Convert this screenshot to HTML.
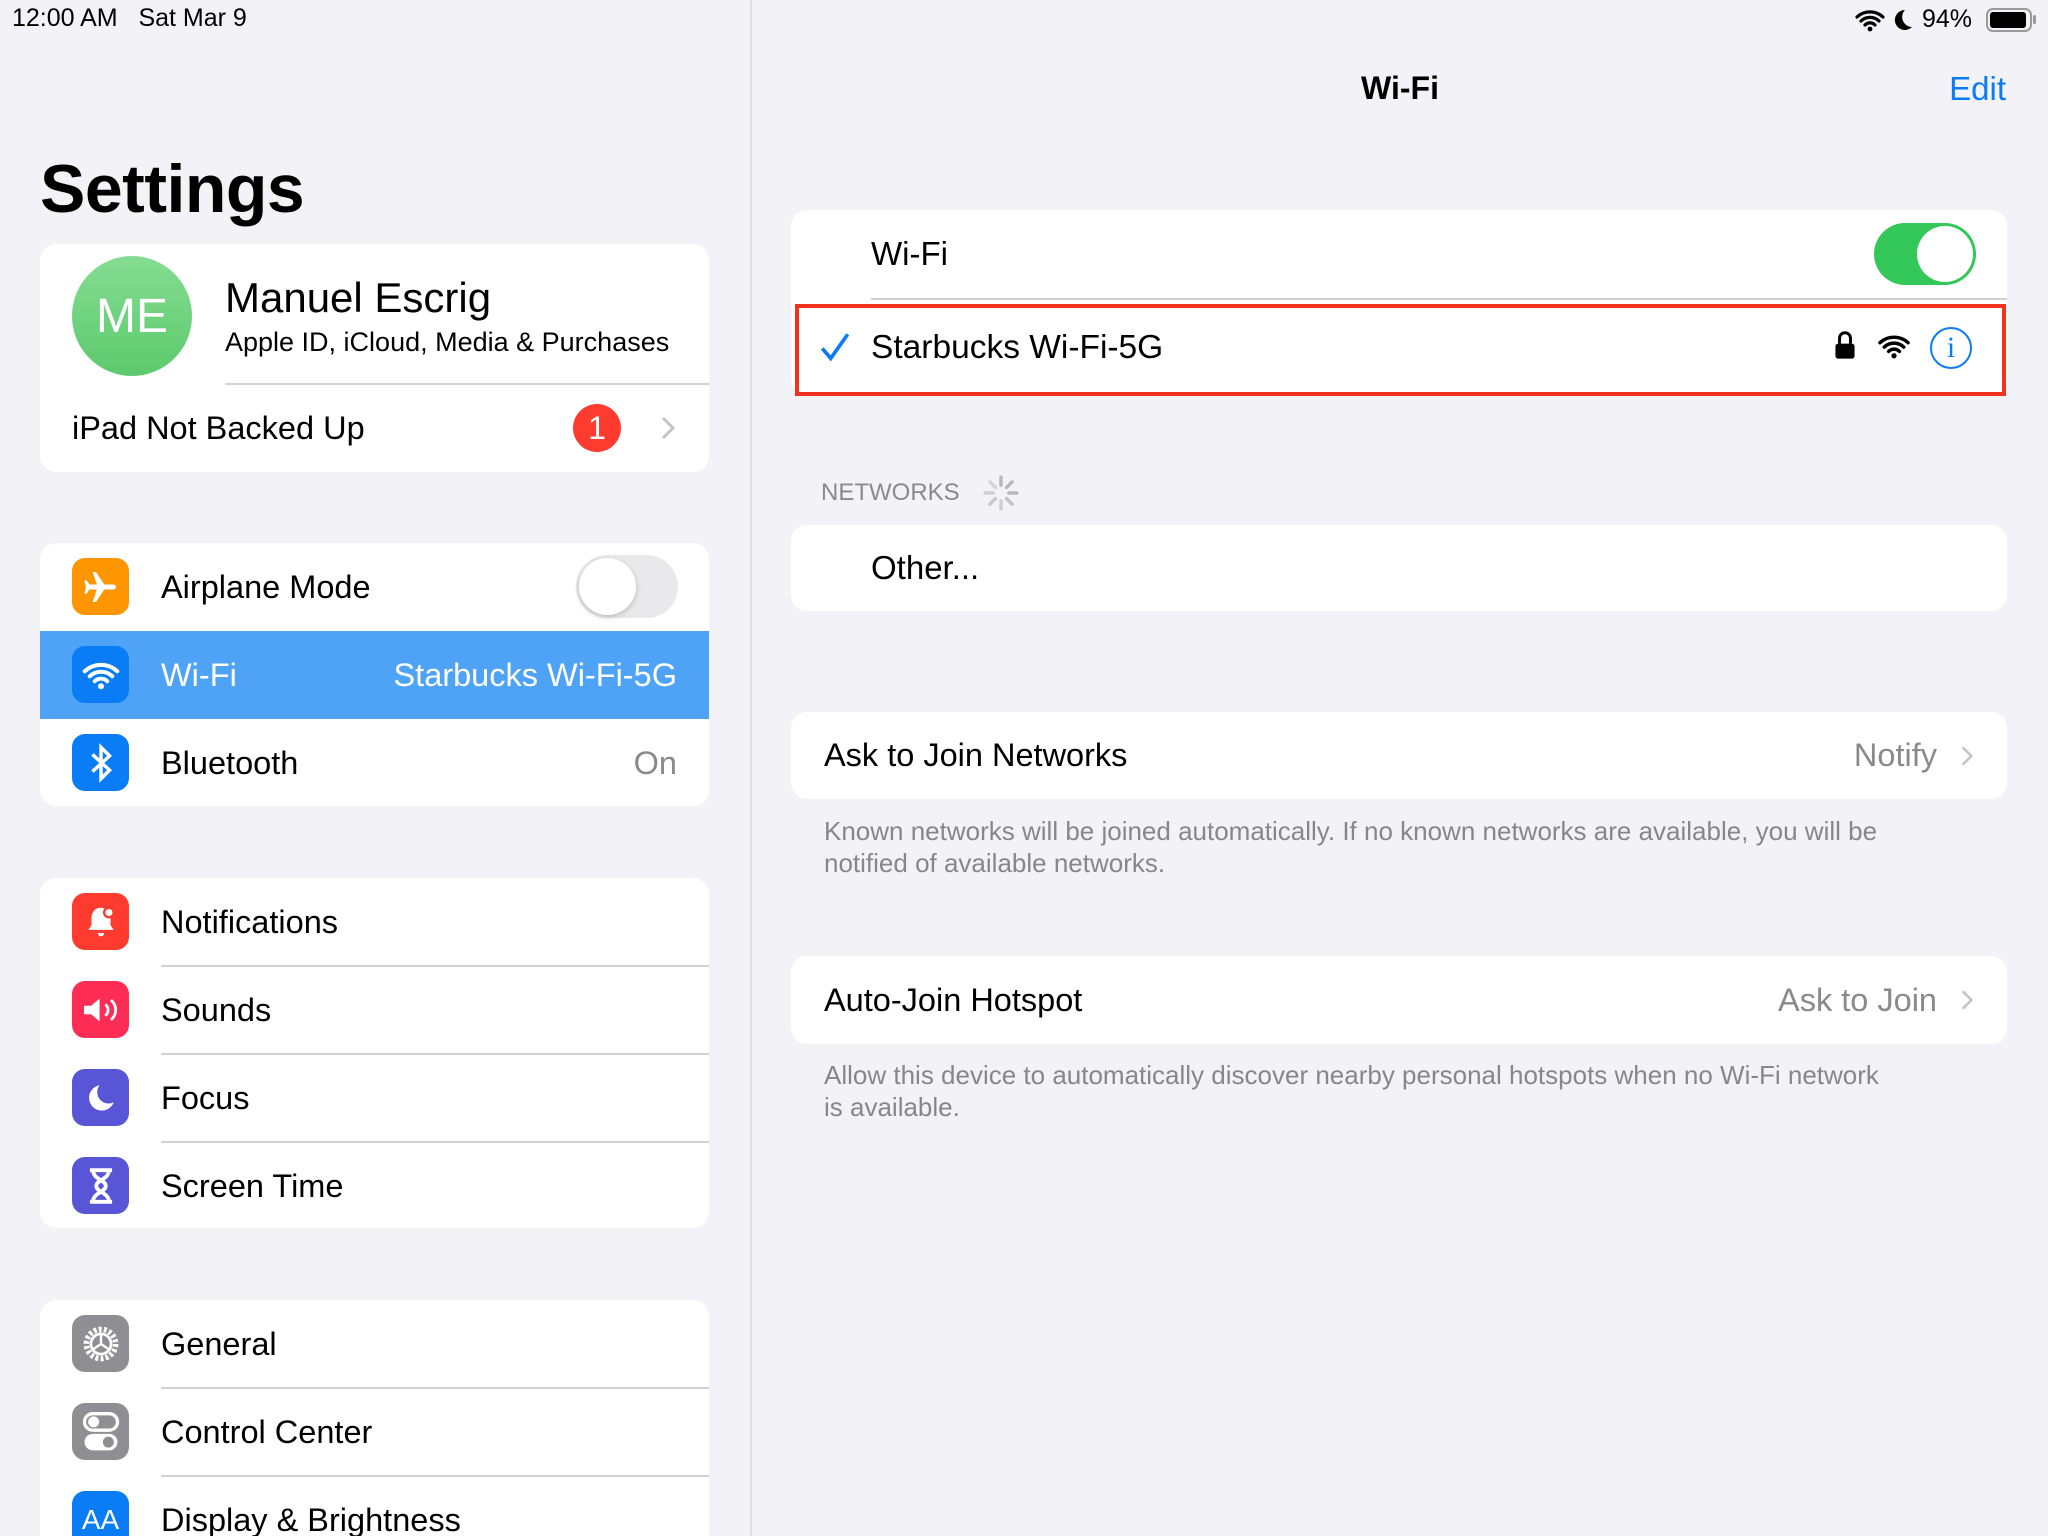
<!DOCTYPE html>
<html style="overflow:hidden;width:2048px;height:1536px"><head><meta charset="utf-8"><style>
*{margin:0;padding:0;box-sizing:border-box}
body{width:2048px;height:1536px;background:#f2f2f7;font-family:"Liberation Sans",sans-serif;color:#000;position:relative;overflow:hidden}
.a{position:absolute}
.card{position:absolute;background:#fff;border-radius:16px;overflow:hidden}
.row{position:absolute;left:0;right:0;height:88px;display:flex;align-items:center}
.ic{position:absolute;left:32px;top:15px;width:57px;height:57px;border-radius:13px;display:flex;align-items:center;justify-content:center}
.lbl{position:absolute;left:121px;font-size:32.5px;line-height:88px;top:0}
.sep{position:absolute;height:1.5px;background:#d1d1d6}
.val{position:absolute;right:32px;top:0;line-height:88px;font-size:32.5px;color:#8a8a8e}
.foot{position:absolute;left:824px;font-size:26px;line-height:32px;color:#86868b;width:1200px}
</style></head><body>
<div class="a" style="left:12px;top:4px;font-size:25px">12:00 AM &nbsp;&nbsp;Sat Mar 9</div>
<div class="a" style="left:750px;top:0;width:2px;height:1536px;background:#e0e0e5"></div>
<svg class="a" style="left:1855px;top:8px" width="30" height="24" viewBox="0 0 30 24"><path d="M2 9a19 19 0 0 1 26 0M6 13a13 13 0 0 1 18 0M10 17a7 7 0 0 1 10 0" stroke="#000" stroke-width="3.2" fill="none" stroke-linecap="round"/><circle cx="15" cy="21" r="2.4"/></svg>
<svg class="a" style="left:1892px;top:8px" width="22" height="24" viewBox="0 0 22 24"><path d="M13 2A10 10 0 1 0 20 19 10 10 0 0 1 13 2z"/></svg>
<div class="a" style="left:1922px;top:5px;font-size:25px">94%</div>
<div class="a" style="left:1986px;top:8px;width:46px;height:24px;border:2px solid #999;border-radius:7px;padding:2px"><div style="width:36px;height:16px;background:#000;border-radius:3px"></div></div>
<div class="a" style="left:2033px;top:15px;width:3px;height:9px;background:#999;border-radius:2px"></div>

<div class="a" style="left:40px;top:150px;font-size:68px;font-weight:bold;letter-spacing:-0.5px">Settings</div>

<div class="card" style="left:40px;top:244px;width:669px;height:228px">
 <div class="a" style="left:32px;top:12px;width:120px;height:120px;border-radius:50%;background:linear-gradient(#85dd92,#5cc96c);color:#fff;font-size:48px;display:flex;align-items:center;justify-content:center">ME</div>
 <div class="a" style="left:185px;top:30px;font-size:42px">Manuel Escrig</div>
 <div class="a" style="left:185px;top:83px;font-size:27px">Apple ID, iCloud, Media &amp; Purchases</div>
 <div class="sep" style="left:185px;right:0;top:139px"></div>
 <div class="a" style="left:32px;top:140px;line-height:88px;font-size:32.5px">iPad Not Backed Up</div>
 <div class="a" style="left:533px;top:160px;width:48px;height:48px;border-radius:50%;background:#ff3b30;color:#fff;font-size:32px;display:flex;align-items:center;justify-content:center">1</div>
 <svg class="a" style="left:620px;top:172px" width="16" height="24" viewBox="0 0 16 24"><path d="M3 2l10 10-10 10" stroke="#c4c4c7" stroke-width="3" fill="none"/></svg>
</div>

<div class="card" style="left:40px;top:543px;width:669px;height:263px">
 <div class="row" style="top:0"><div class="ic" style="background:#ff9500"><svg width="40" height="40" viewBox="0 0 24 24"><path fill="#fff" d="M21 12c0-1-1-1.5-2-1.5h-5L9 3H7l2.5 7.5H5L3.5 8H2l1 4-1 4h1.5L5 13.5h4.5L7 21h2l5-7.5h5c1 0 2-.5 2-1.5z"/></svg></div><div class="lbl">Airplane Mode</div>
  <div class="a" style="left:536px;top:12px;width:102px;height:63px;border-radius:32px;background:#e9e9eb"><div style="position:absolute;left:3px;top:3px;width:57px;height:57px;border-radius:50%;background:#fff;box-shadow:0 2px 6px rgba(0,0,0,.2)"></div></div></div>
 <div class="row" style="top:88px;background:#4fa3f7"><div class="ic" style="background:#0a7cf5"><svg width="38" height="30" viewBox="0 0 30 24"><path d="M2 9a19 19 0 0 1 26 0M6 13a13 13 0 0 1 18 0M10 17a7 7 0 0 1 10 0" stroke="#fff" stroke-width="3.2" fill="none" stroke-linecap="round"/><circle cx="15" cy="21" r="2.4" fill="#fff"/></svg></div><div class="lbl" style="color:#fff">Wi-Fi</div><div class="val" style="color:#fff">Starbucks Wi-Fi-5G</div></div>
 <div class="row" style="top:176px"><div class="ic" style="background:#0a7cf5"><svg width="30" height="40" viewBox="0 0 20 28"><path d="M4 8l12 11-6 6V3l6 6L4 20" stroke="#fff" stroke-width="2.4" fill="none"/></svg></div><div class="lbl">Bluetooth</div><div class="val">On</div></div>
</div>

<div class="card" style="left:40px;top:878px;width:669px;height:350px">
 <div class="row" style="top:0"><div class="ic" style="background:#ff3b30"><svg width="38" height="38" viewBox="0 0 24 24"><path fill="#fff" d="M12 3c-4 0-6 3-6 7v4l-2 3h16l-2-3v-4c0-4-2-7-6-7zM10 19h4a2 2 0 0 1-4 0z"/><circle cx="17" cy="6" r="3" fill="#fff" stroke="#ff3b30" stroke-width="1.5"/></svg></div><div class="lbl">Notifications</div></div>
 <div class="sep" style="left:121px;right:0;top:87px"></div>
 <div class="row" style="top:88px"><div class="ic" style="background:#ff2d55"><svg width="40" height="34" viewBox="0 0 28 24"><path fill="#fff" d="M2 9h5l6-5v16l-6-5H2z"/><path d="M17 8a5 5 0 0 1 0 8M21 5a9 9 0 0 1 0 14" stroke="#fff" stroke-width="2" fill="none"/></svg></div><div class="lbl">Sounds</div></div>
 <div class="sep" style="left:121px;right:0;top:175px"></div>
 <div class="row" style="top:176px"><div class="ic" style="background:#5856d6"><svg width="34" height="34" viewBox="0 0 24 24"><path fill="#fff" d="M11 3A9 9 0 1 0 21 15 8 8 0 0 1 11 3z"/></svg></div><div class="lbl">Focus</div></div>
 <div class="sep" style="left:121px;right:0;top:263px"></div>
 <div class="row" style="top:264px"><div class="ic" style="background:#5856d6"><svg width="32" height="38" viewBox="0 0 20 24"><path d="M3 2h14M3 22h14M5 2c0 6 8 6 8 10s-8 4-8 10M15 2c0 6-8 6-8 10s8 4 8 10" stroke="#fff" stroke-width="2.4" fill="none"/></svg></div><div class="lbl">Screen Time</div></div>
</div>

<div class="card" style="left:40px;top:1300px;width:669px;height:260px">
 <div class="row" style="top:0"><div class="ic" style="background:#8e8e93"><svg width="44" height="44" viewBox="0 0 24 24"><circle cx="12" cy="12" r="8" stroke="#fff" stroke-width="3" stroke-dasharray="1.6 1.2" fill="none"/><circle cx="12" cy="12" r="5.5" stroke="#fff" stroke-width="1.5" fill="none"/><path d="M12 12V6.5M12 12l-4.5 3M12 12l4.5 3" stroke="#fff" stroke-width="1.3"/></svg></div><div class="lbl">General</div></div>
 <div class="sep" style="left:121px;right:0;top:87px"></div>
 <div class="row" style="top:88px"><div class="ic" style="background:#8e8e93"><svg width="38" height="44" viewBox="0 0 20 24"><rect x="1" y="2" width="18" height="9" rx="4.5" stroke="#fff" stroke-width="1.8" fill="none"/><circle cx="6" cy="6.5" r="3" fill="#fff"/><rect x="1" y="13" width="18" height="9" rx="4.5" fill="#fff"/><circle cx="14" cy="17.5" r="3" fill="#8e8e93"/></svg></div><div class="lbl">Control Center</div></div>
 <div class="sep" style="left:121px;right:0;top:175px"></div>
 <div class="row" style="top:176px"><div class="ic" style="background:#0a7cf5;color:#fff;font-size:28px">AA</div><div class="lbl">Display &amp; Brightness</div></div>
</div>

<div class="a" style="left:1300px;width:200px;text-align:center;top:70px;font-size:32px;font-weight:bold">Wi-Fi</div>
<div class="a" style="right:42px;top:70px;font-size:33px;color:#0a7cf5">Edit</div>

<div class="card" style="left:791px;top:210px;width:1216px;height:184px">
 <div class="a" style="left:80px;top:0;line-height:88px;font-size:33px">Wi-Fi</div>
 <div class="a" style="left:1083px;top:13px;width:102px;height:62px;border-radius:31px;background:#34c759"><div style="position:absolute;right:3px;top:3px;width:56px;height:56px;border-radius:50%;background:#fff"></div></div>
 <div class="sep" style="left:80px;right:0;top:88px"></div>
</div>
<div class="a" style="left:795px;top:304px;width:1211px;height:92px;border:4px solid #f0321e;background:#fff"></div>
<svg class="a" style="left:818px;top:330px" width="34" height="34" viewBox="0 0 24 24"><path d="M3 13l6 7L21 3" stroke="#0a7cf5" stroke-width="2.6" fill="none"/></svg>
<div class="a" style="left:871px;top:304px;line-height:88px;font-size:33.5px">Starbucks Wi-Fi-5G</div>
<svg class="a" style="left:1834px;top:330px" width="22" height="30" viewBox="0 0 16 22"><path d="M4 10V6a4 4 0 0 1 8 0v4" stroke="#000" stroke-width="2.2" fill="none"/><rect x="1" y="10" width="14" height="11" rx="2"/></svg>
<svg class="a" style="left:1877px;top:333px" width="34" height="26" viewBox="0 0 30 24"><path d="M2 9a19 19 0 0 1 26 0M6 13a13 13 0 0 1 18 0M10 17a7 7 0 0 1 10 0" stroke="#000" stroke-width="3.2" fill="none" stroke-linecap="round"/><circle cx="15" cy="21" r="2.4"/></svg>
<div class="a" style="left:1930px;top:327px;width:42px;height:42px;border:2.5px solid #0a7cf5;border-radius:50%;color:#0a7cf5;font-family:'Liberation Serif',serif;font-size:30px;text-align:center;line-height:37px">i</div>

<div class="a" style="left:821px;top:479px;font-size:24px;color:#8a8a8e">NETWORKS</div>
<svg class="a" style="left:982px;top:474px" width="38" height="38" viewBox="0 0 24 24"><g stroke="#b8b8bc" stroke-width="2.2" stroke-linecap="round"><path d="M12 2v5"/><path d="M12 17v5" opacity=".6"/><path d="M2 12h5" opacity=".6"/><path d="M17 12h5"/><path d="M5 5l3.5 3.5" opacity=".5"/><path d="M15.5 15.5L19 19" opacity=".8"/><path d="M19 5l-3.5 3.5"/><path d="M5 19l3.5-3.5" opacity=".7"/></g></svg>

<div class="card" style="left:791px;top:525px;width:1216px;height:86px"><div class="a" style="left:80px;top:0;line-height:86px;font-size:33px">Other...</div></div>

<div class="card" style="left:791px;top:712px;width:1216px;height:87px">
 <div class="a" style="left:33px;top:0;line-height:87px;font-size:32.5px">Ask to Join Networks</div>
 <div class="a" style="right:70px;top:0;line-height:87px;font-size:32.5px;color:#8a8a8e">Notify</div>
 <svg class="a" style="right:33px;top:32px" width="14" height="24" viewBox="0 0 16 24"><path d="M3 2l10 10-10 10" stroke="#c4c4c7" stroke-width="3" fill="none"/></svg>
</div>
<div class="foot" style="top:815px">Known networks will be joined automatically. If no known networks are available, you will be<br>notified of available networks.</div>

<div class="card" style="left:791px;top:956px;width:1216px;height:88px">
 <div class="a" style="left:33px;top:0;line-height:88px;font-size:32.5px">Auto-Join Hotspot</div>
 <div class="a" style="right:70px;top:0;line-height:88px;font-size:32.5px;color:#8a8a8e">Ask to Join</div>
 <svg class="a" style="right:33px;top:32px" width="14" height="24" viewBox="0 0 16 24"><path d="M3 2l10 10-10 10" stroke="#c4c4c7" stroke-width="3" fill="none"/></svg>
</div>
<div class="foot" style="top:1059px">Allow this device to automatically discover nearby personal hotspots when no Wi-Fi network<br>is available.</div>
</body></html>
